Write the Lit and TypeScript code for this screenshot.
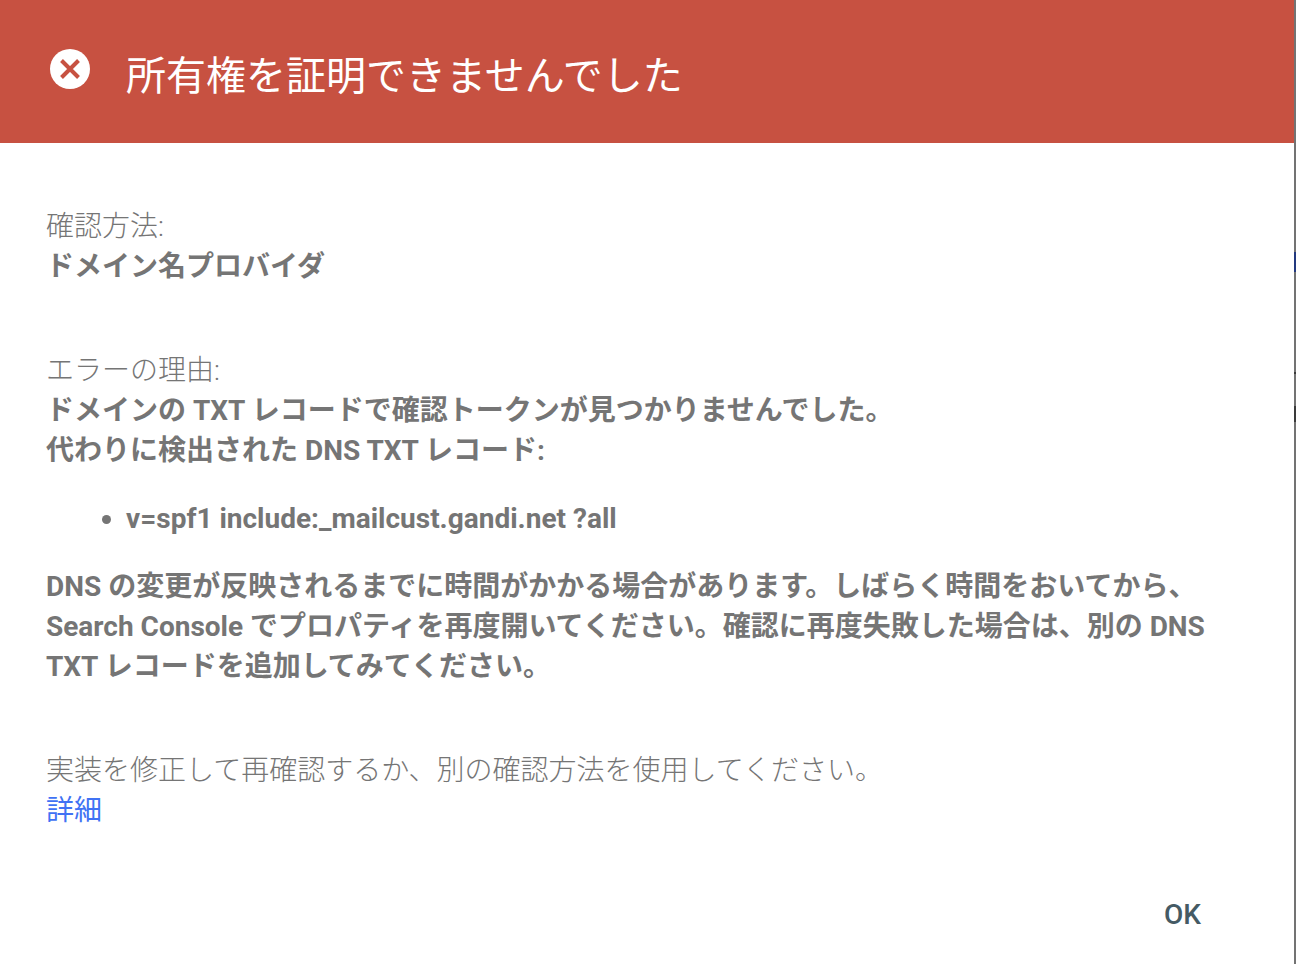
import { LitElement, html, css } from "lit";
import { customElement } from "lit/decorators.js";

@customElement("app-root")
export class AppRoot extends LitElement {
  static styles = css`
    :host {
      display: block;
      width: 1296px;
      height: 964px;
      overflow: hidden;
      font-family: Roboto, "Noto Sans CJK JP", sans-serif;
    }
    .page { display: flex; height: 964px; background: #737373; }
    .dialog {
      width: 1294px;
      flex: none;
      background: #fff;
      display: flex;
      flex-direction: column;
    }
    .strip { flex: 1; display: flex; flex-direction: column; }
    .mark-blue { height: 20px; background: #23397f; margin-top: 252px; }
    .mark-dark { height: 2px; background: #3a3a3a; margin-top: 100px; }
    .mark-box { height: 16px; background: #3a3a3a; margin-top: 32px; }
    header {
      height: 143px;
      flex: none;
      box-sizing: border-box;
      background: #c75141;
      display: flex;
      align-items: flex-start;
      padding: 49px 0 0 50px;
      gap: 36px;
      color: #fff;
    }
    header svg { width: 40px; height: 40px; flex: none; display: block; }
    h1 {
      margin: 3px 0 0;
      font-size: 40px;
      line-height: 50px;
      font-weight: 400;
      white-space: nowrap;
    }
    .content {
      flex: 1;
      padding: 64px 80px 0 46px;
      font-size: 28px;
      line-height: 40px;
      font-weight: 300;
      color: #757575;
    }
    .block { margin: 0; }
    .gap-1 { margin-top: 64px; }
    .gap-2 { margin-top: 64px; }
    b { font-weight: 700; }
    ul { margin: 28px 0 28px; padding: 0 0 0 80px; font-weight: 700; }
    a { color: #4072f4; font-weight: 400; text-decoration: none; }
    footer {
      display: flex;
      justify-content: flex-end;
      padding: 0 93px 29px 0;
    }
    .ok {
      font-size: 28px;
      line-height: 40px;
      font-weight: 500;
      color: #455a64;
    }
  `;

  render() {
    return html`
      <div class="page">
        <div class="dialog">
          <header>
            <svg viewBox="0 0 40 40" aria-hidden="true">
              <circle cx="20" cy="20" r="20" fill="#fff"></circle>
              <path d="M11.5 11.5 28.5 28.5M28.5 11.5 11.5 28.5" stroke="#c75141" stroke-width="4" fill="none"></path>
            </svg>
            <h1>所有権を証明できませんでした</h1>
          </header>
          <div class="content">
            <p class="block">確認方法:<br /><b>ドメイン名プロバイダ</b></p>
            <p class="block gap-1">エラーの理由:<br /><b>ドメインの TXT レコードで確認トークンが見つかりませんでした。<br />代わりに検出された DNS TXT レコード:</b></p>
            <ul><li>v=spf1 include:_mailcust.gandi.net ?all</li></ul>
            <p class="block"><b>DNS の変更が反映されるまでに時間がかかる場合があります。しばらく時間をおいてから、Search Console でプロパティを再度開いてください。確認に再度失敗した場合は、別の DNS TXT レコードを追加してみてください。</b></p>
            <p class="block gap-2">実装を修正して再確認するか、別の確認方法を使用してください。<br /><a href="#">詳細</a></p>
          </div>
          <footer><span class="ok">OK</span></footer>
        </div>
        <div class="strip">
          <div class="mark-blue"></div>
          <div class="mark-dark"></div>
          <div class="mark-box"></div>
        </div>
      </div>
    `;
  }
}
